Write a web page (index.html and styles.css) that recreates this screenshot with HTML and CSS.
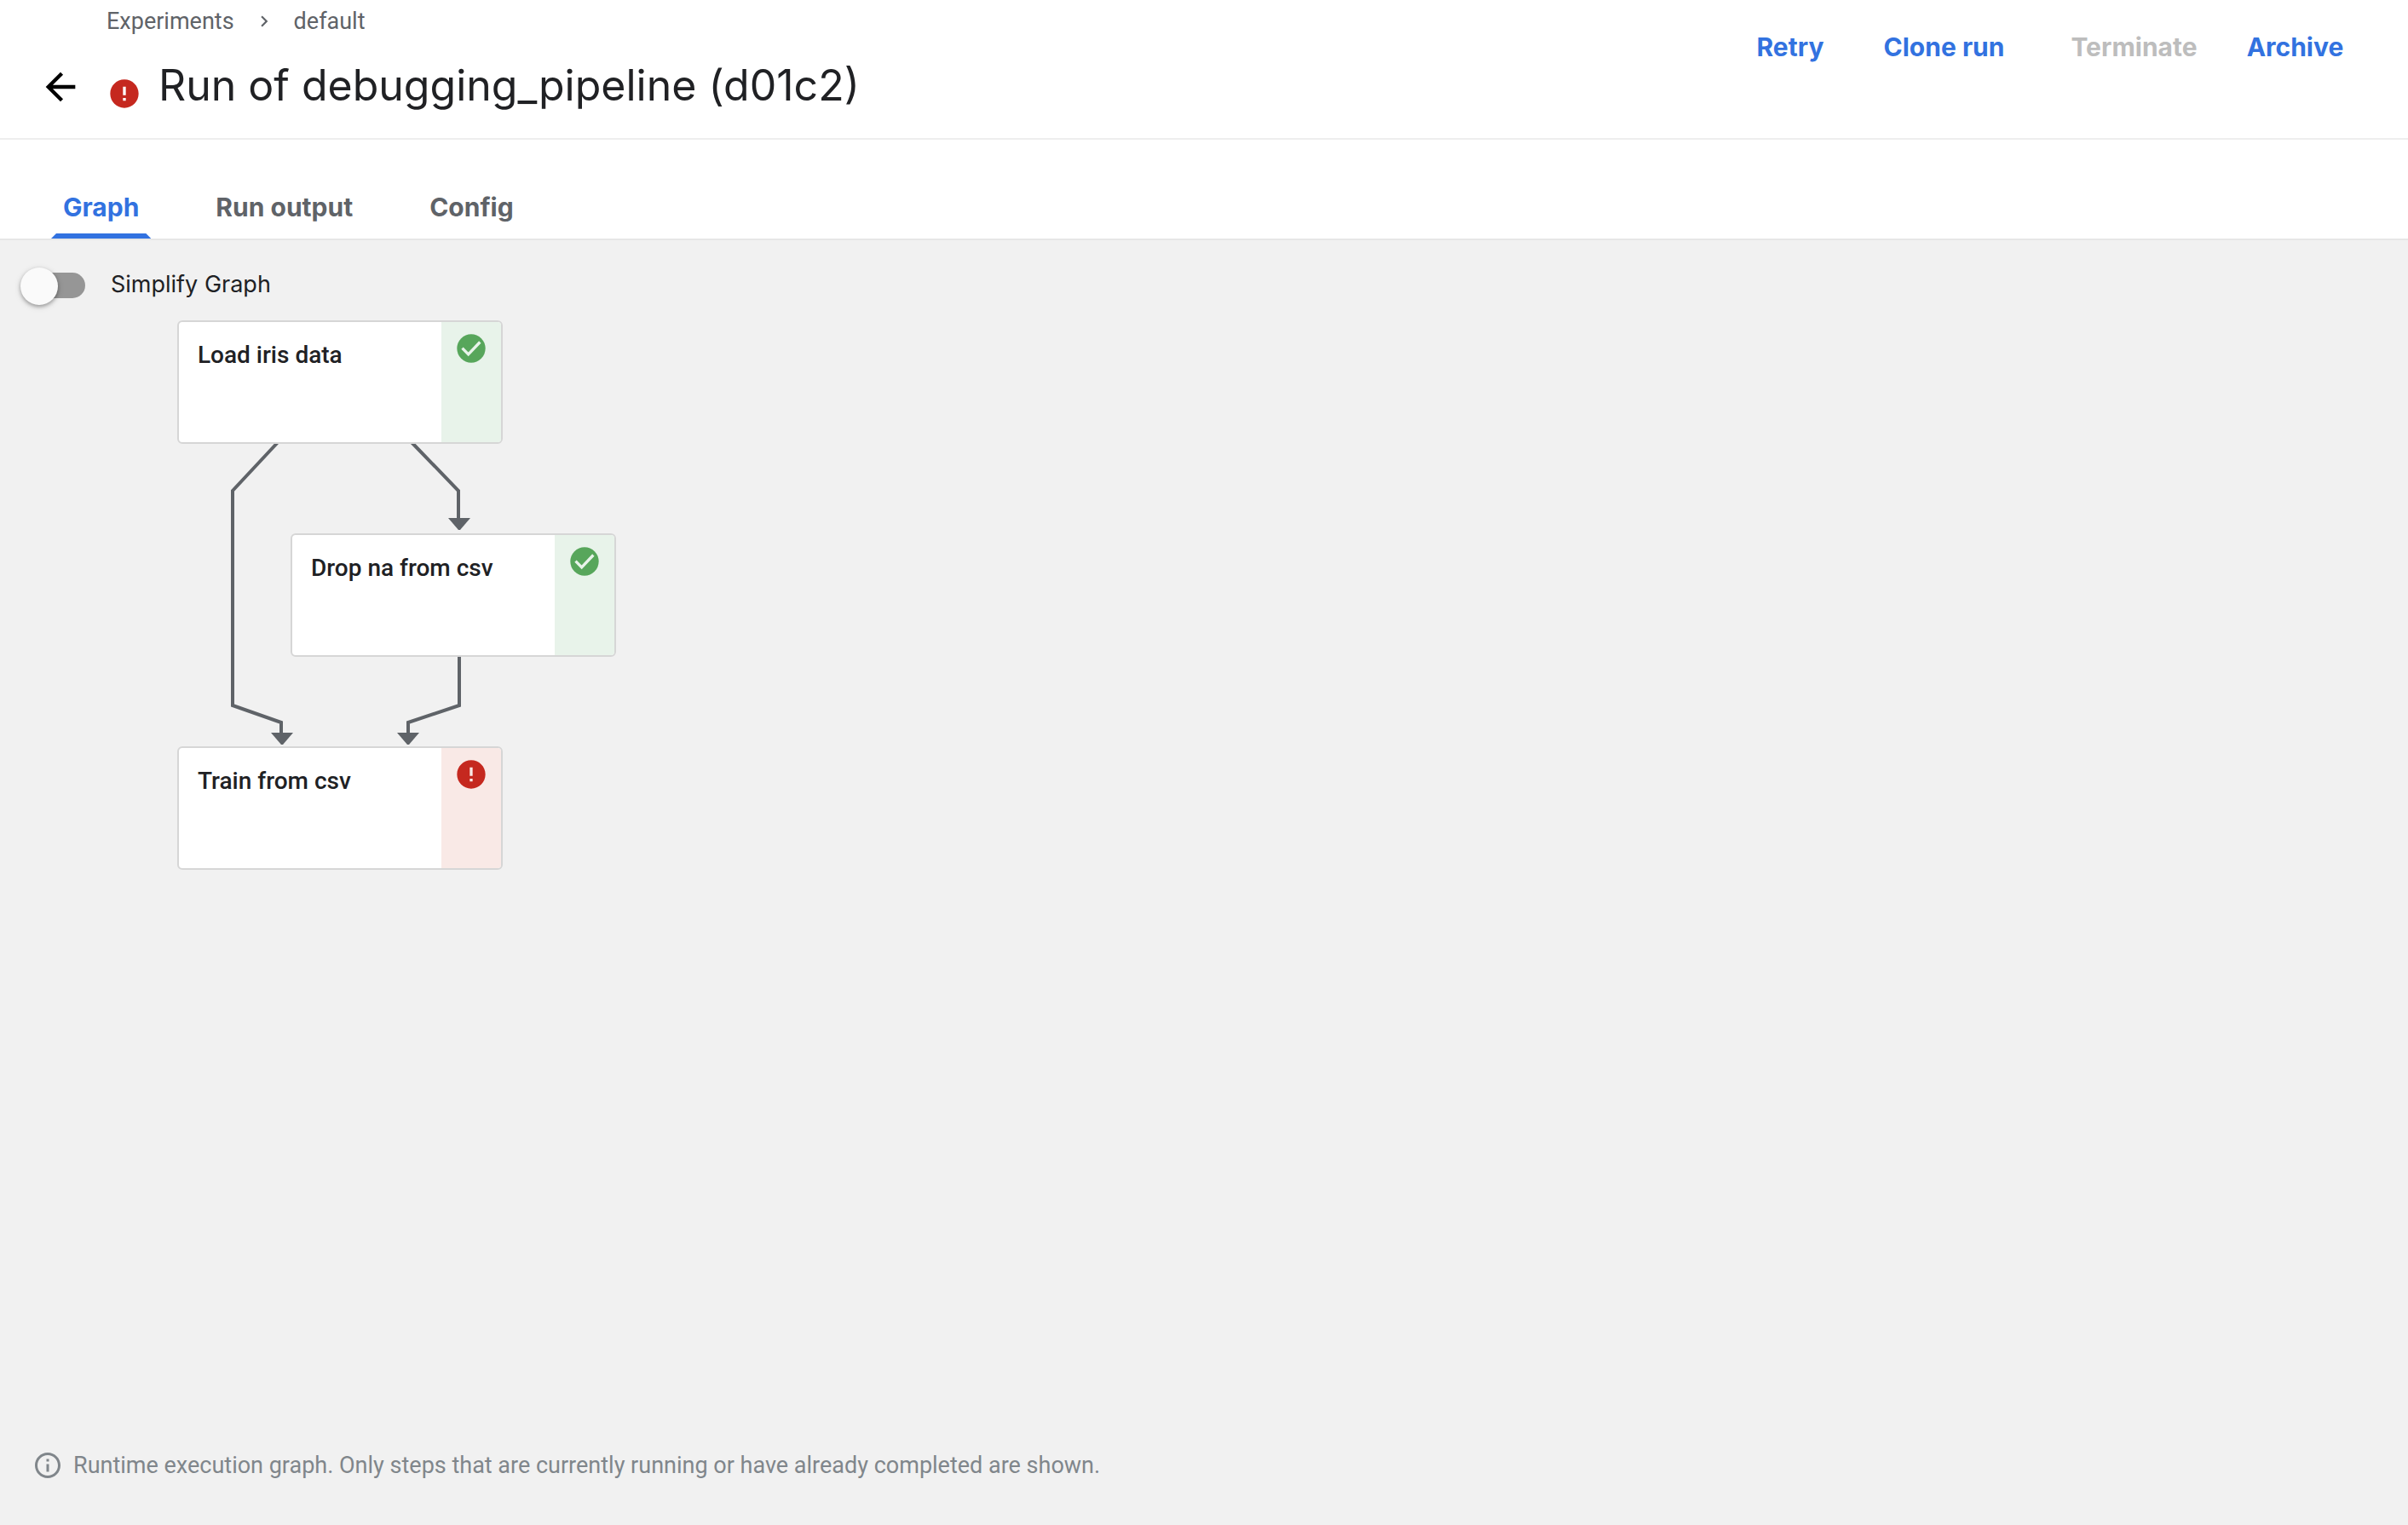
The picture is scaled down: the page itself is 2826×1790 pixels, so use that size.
FILE: index.html
```html
<!DOCTYPE html>
<html lang="en">
<head>
<meta charset="utf-8">
<meta name="viewport" content="width=device-width, initial-scale=1">
<title>Run of debugging_pipeline (d01c2)</title>
<link rel="stylesheet" href="styles.css">
</head>
<body>
<header class="toolbar">
  <div class="heading">
    <nav class="breadcrumbs" aria-label="Breadcrumb">
      <a href="#experiments">Experiments</a>
      <svg class="chevron" viewBox="0 0 24 24" aria-hidden="true"><path d="M8.59 16.59 13.17 12 8.59 7.41 10 6l6 6-6 6z"/></svg>
      <a href="#default">default</a>
    </nav>
    <div class="title-row">
      <button class="back" type="button" aria-label="Back">
        <svg viewBox="0 0 24 24" aria-hidden="true"><path d="M20 11H7.83l5.59-5.59L12 4l-8 8 8 8 1.41-1.41L7.83 13H20v-2z"/></svg>
      </button>
      <svg class="status-icon failed" viewBox="0 0 24 24" role="img" aria-label="Failed"><path d="M12 2C6.48 2 2 6.48 2 12s4.48 10 10 10 10-4.48 10-10S17.52 2 12 2zm1 15h-2v-2h2v2zm0-4h-2V7h2v6z"/></svg>
      <h1 class="title">Run of debugging_pipeline (d01c2)</h1>
    </div>
  </div>
  <div class="actions">
    <button type="button">Retry</button>
    <button type="button">Clone run</button>
    <button type="button" disabled>Terminate</button>
    <button type="button">Archive</button>
  </div>
</header>
<nav class="tabs" aria-label="Run details">
  <button class="tab active" type="button">Graph</button>
  <button class="tab" type="button">Run output</button>
  <button class="tab" type="button">Config</button>
</nav>
<main class="content">
  <label class="simplify"><input class="switch" type="checkbox"><span>Simplify Graph</span></label>
  <div class="graph">
    <svg class="edges" viewBox="0 0 760 680" aria-hidden="true">
      <path class="line" d="M329 158 273 218V470L330 490V504"/>
      <path class="line" d="M480 158 538 218V252"/>
      <path class="line" d="M539 410V470L479 490V504"/>
      <path class="head" d="M318 502h26l-12 14h-2z"/>
      <path class="head" d="M526 250h26l-12 14h-2z"/>
      <path class="head" d="M466 502h26l-12 14h-2z"/>
    </svg>
    <div class="node node-load">
      <div class="name">Load iris data</div>
      <div class="state done"><svg class="status-icon succeeded" viewBox="0 0 24 24" role="img" aria-label="Succeeded"><circle cx="12" cy="12" r="10"/><path d="M5.700 11.800 10 16.100 18.200 7.500"/></svg></div>
    </div>
    <div class="node node-drop">
      <div class="name">Drop na from csv</div>
      <div class="state done"><svg class="status-icon succeeded" viewBox="0 0 24 24" role="img" aria-label="Succeeded"><circle cx="12" cy="12" r="10"/><path d="M5.700 11.800 10 16.100 18.200 7.500"/></svg></div>
    </div>
    <div class="node node-train">
      <div class="name">Train from csv</div>
      <div class="state error"><svg class="status-icon failed" viewBox="0 0 24 24" role="img" aria-label="Failed"><path d="M12 2C6.48 2 2 6.48 2 12s4.48 10 10 10 10-4.48 10-10S17.52 2 12 2zm1 15h-2v-2h2v2zm0-4h-2V7h2v6z"/></svg></div>
    </div>
  </div>
  <footer class="note">
    <svg viewBox="0 0 24 24" aria-hidden="true"><path d="M11 7h2v2h-2zm0 4h2v6h-2zm1-9C6.480 2 2 6.480 2 12s4.480 10 10 10 10-4.480 10-10S17.520 2 12 2zm0 18c-4.410 0-8-3.590-8-8s3.590-8 8-8 8 3.590 8 8-3.590 8-8 8z"/></svg>
    <span>Runtime execution graph. Only steps that are currently running or have already completed are shown.</span>
  </footer>
</main>
</body>
</html>
```
FILE: styles.css
```css
* {
  box-sizing: border-box;
}

body {
  margin: 0;
  min-height: 100vh;
  display: flex;
  flex-direction: column;
  background: #fff;
  color: #202124;
  font-family: Roboto, "Liberation Sans", sans-serif;
}

button {
  border: 0;
  padding: 0;
  background: none;
  font-family: Inter, "Liberation Sans", sans-serif;
  font-size: 30px;
  font-weight: 700;
  line-height: 40px;
  white-space: nowrap;
  cursor: pointer;
}

.toolbar {
  display: flex;
  justify-content: space-between;
  align-items: flex-start;
  padding: 9px 60px 32px 43px;
  border-bottom: 2px solid #eee;
}

.heading {
  display: flex;
  flex-direction: column;
  gap: 25px;
}

.breadcrumbs {
  display: flex;
  align-items: center;
  padding-left: 82px;
  gap: 22px;
  font-size: 27px;
  line-height: 32px;
}

.breadcrumbs a {
  color: #5f6368;
  text-decoration: none;
}

.chevron {
  width: 26px;
  height: 26px;
  fill: #5f6368;
}

.title-row {
  display: flex;
  align-items: flex-end;
}

.back {
  display: grid;
  place-items: center;
  width: 56px;
  height: 56px;
  margin-right: 27px;
}

.back svg {
  width: 52px;
  height: 52px;
  fill: #000;
}

.title {
  margin: 0 0 0 20px;
  font-family: Inter, "Liberation Sans", sans-serif;
  font-size: 50px;
  font-weight: 400;
  line-height: 60px;
}

.title-row {
  height: 64px;
}

.status-icon {
  width: 40px;
  height: 40px;
  flex: none;
}

.failed {
  fill: #c5281f;
}

.succeeded circle {
  fill: #57a65b;
}

.succeeded path {
  fill: none;
  stroke: #e8f3ea;
  stroke-width: 2;
}

.actions {
  display: grid;
  grid-template-columns: 128px 213px 213px 145px;
  gap: 10px;
  padding-top: 26px;
}

.actions button {
  color: #3272e0;
}

.actions button:disabled {
  color: #bdbdbd;
  cursor: default;
}

.tabs {
  display: flex;
  gap: 62px;
  padding: 59px 60px 0;
  border-bottom: 2px solid #e6e6e6;
}

.tab {
  display: flex;
  flex-direction: column;
  align-items: center;
  height: 57px;
  padding: 0 14px;
  position: relative;
  color: #5f6368;
}

.tab.active {
  color: #3272e0;
}

.tab.active::after {
  content: "";
  position: absolute;
  left: 0;
  right: 0;
  bottom: 0;
  height: 6px;
  background: #3272e0;
  clip-path: polygon(6px 0, calc(100% - 6px) 0, 100% 100%, 0 100%);
}

.content {
  flex: 1;
  display: flex;
  flex-direction: column;
  padding-top: 32px;
  background: #f1f1f1;
}

.simplify {
  display: flex;
  align-items: flex-start;
  align-self: flex-start;
  gap: 30px;
  padding-left: 24px;
  font-family: Inter, "Liberation Sans", sans-serif;
  font-size: 27px;
  line-height: 40px;
  cursor: pointer;
}

.switch {
  appearance: none;
  position: relative;
  width: 76px;
  height: 44px;
  margin: 0;
}

.switch::before {
  content: "";
  position: absolute;
  left: 8px;
  right: 0;
  top: 6px;
  height: 30px;
  border-radius: 15px;
  background: #969696;
}

.switch::after {
  content: "";
  position: absolute;
  left: 0;
  top: 0;
  width: 44px;
  height: 44px;
  border-radius: 50%;
  background: #fafafa;
  box-shadow: 0 2px 4px rgba(0, 0, 0, 0.3), 0 2px 8px rgba(0, 0, 0, 0.12);
}

.switch:checked::after {
  left: auto;
  right: 0;
}

.graph {
  position: relative;
  flex: 1;
  min-height: 680px;
}

.edges {
  display: block;
  width: 760px;
  height: 680px;
}

.line {
  fill: none;
  stroke: #5f6368;
  stroke-width: 4;
}

.head {
  fill: #5f6368;
}

.node {
  position: absolute;
  display: flex;
  width: 382px;
  height: 145px;
  border: 2px solid #d6d6d6;
  border-radius: 6px;
  background: #fff;
  overflow: hidden;
}

.node-load {
  left: 208px;
  top: 18px;
}

.node-drop {
  left: 341px;
  top: 268px;
}

.node-train {
  left: 208px;
  top: 518px;
}

.name {
  flex: 1;
  padding: 20px 0 0 22px;
  font-size: 28px;
  font-weight: 500;
  line-height: 37px;
}

.state {
  display: flex;
  justify-content: center;
  width: 70px;
  padding-top: 11px;
}

.done {
  background: #e8f3ea;
}

.error {
  background: #f9e9e6;
}

.note {
  display: flex;
  align-items: center;
  gap: 12px;
  padding: 0 38px 52px;
  color: #80868b;
  font-size: 27px;
  line-height: 36px;
}

.note svg {
  width: 36px;
  height: 36px;
  flex: none;
  fill: #80868b;
}
```
